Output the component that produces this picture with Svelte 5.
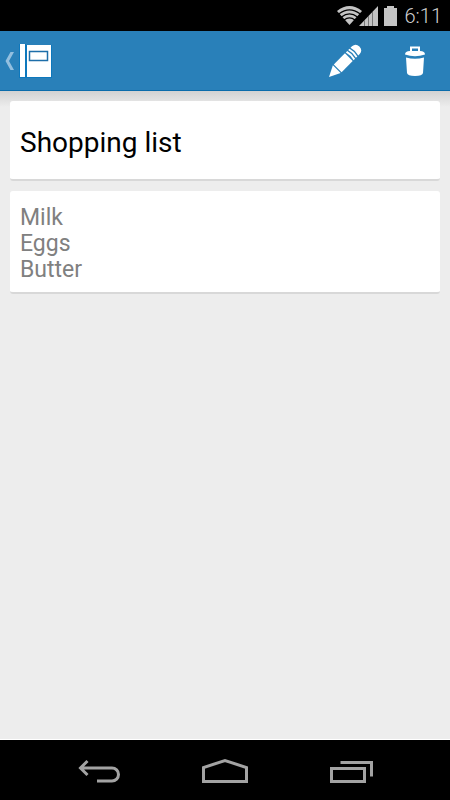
<script>
  let note = $state({
    title: "Shopping list",
    lines: ["Milk", "Eggs", "Butter"]
  });

  let time = $state("6:11");
</script>

<div class="screen">
  <div class="status-bar">
    <svg class="status-icons" width="61" height="20" viewBox="0 0 61 20" aria-hidden="true">
      <!-- wifi -->
      <path d="M0 5Q12.500 -5 25 5L12.500 19Z" fill="#c4c4c4" />
      <g fill="none" stroke="#000" stroke-width="1.300">
        <path d="M2 7.800Q12.500 -0.200 23 7.800" />
        <path d="M4.500 11Q12.500 4.800 20.500 11" />
        <path d="M7 14Q12.500 9.800 18 14" />
      </g>
      <!-- signal -->
      <path d="M22 20L41 0V20Z" fill="#c4c4c4" />
      <path d="M27.500 14V20M31.500 10V20M35.500 6V20" stroke="#777" stroke-width="1" />
      <!-- battery -->
      <path d="M47 2H50V0H57V2H60V20H47Z" fill="#c4c4c4" />
    </svg>
    <span class="clock">{time}</span>
  </div>

  <header class="action-bar">
    <button class="up" aria-label="Back to notes">
      <svg width="52" height="36" viewBox="0 0 52 36">
        <path d="M10.500 9H14L9 18L14 27H10.500L5.500 18Z" fill="#93bfdf" />
        <path d="M19 1H26V2H52V35H19Z" fill="#0d78bd" />
        <rect x="20" y="1" width="5" height="33" fill="#fff" />
        <rect x="27" y="2" width="24" height="32" fill="#fff" />
        <rect x="29.500" y="8.500" width="18" height="9" fill="#fff" stroke="#1d6ea9" stroke-width="1.500" />
      </svg>
    </button>
    <div class="actions">
      <button class="action" aria-label="Edit">
        <svg width="34" height="34" viewBox="0 0 34 34">
          <g transform="translate(1 33) rotate(-45)">
            <path d="M0 0L11 -5.500V5.500Z" fill="#fff" />
            <path d="M12.300 -5.500H28V5.500H12.300Z" fill="#fff" />
            <path d="M29.300 -5.500H31.300Q33 0 31.300 5.500H29.300Q31 0 29.300 -5.500ZM32.600 -5.500H34.600Q36.300 0 34.600 5.500H32.600Q34.300 0 32.600 -5.500ZM35.900 -5.500H38Q43 -5 43 0T38 5.500H35.900Q37.600 0 35.900 -5.500Z" fill="#fff" />
          </g>
        </svg>
      </button>
      <button class="action" aria-label="Delete">
        <svg width="22" height="30" viewBox="0 0 22 30">
          <path d="M7 5.500V1.500H15V5.500" fill="none" stroke="#fff" stroke-width="2" />
          <path d="M1 8.500Q1 5 6 5H16Q21 5 21 8.500Q11 12 1 8.500Z" fill="#fff" />
          <path d="M2 11.500Q11 14 20 11.500L19 27Q18.500 30 11 30T3 27Z" fill="#fff" />
        </svg>
      </button>
    </div>
  </header>

  <main>
    <h1 class="card title">{note.title}</h1>
    <div class="card body">
      {#each note.lines as line}
        <p>{line}</p>
      {/each}
    </div>
  </main>

  <nav class="nav-bar">
    <button aria-label="Back">
      <svg width="48" height="28" viewBox="0 0 48 28">
        <path d="M5 12H37A6.500 6.500 0 0 1 37 25H22M12.500 5L5.500 12L12.500 19" />
      </svg>
    </button>
    <button aria-label="Home">
      <svg width="48" height="28" viewBox="0 0 48 28">
        <path d="M2.500 25.500V11.500L24 4.500L45.500 11.500V25.500Z" />
      </svg>
    </button>
    <button aria-label="Recent apps">
      <svg width="48" height="28" viewBox="0 0 48 28">
        <path d="M4.500 12.500H37.500V25.500H4.500ZM13.500 6.500H44.500V20.500" />
      </svg>
    </button>
  </nav>
</div>

<style>
  :global(body) {
    margin: 0;
    background: #ededed;
  }

  .screen {
    display: flex;
    flex-direction: column;
    min-height: 100vh;
    font-family: Roboto, "Liberation Sans", sans-serif;
  }

  button {
    display: flex;
    align-items: center;
    border: 0;
    padding: 0;
    background: transparent;
    cursor: pointer;
  }

  svg {
    display: block;
  }

  .status-bar {
    display: flex;
    align-items: center;
    justify-content: flex-end;
    gap: 7px;
    height: 31px;
    padding-right: 8px;
    background: #000;
  }

  .clock {
    padding-top: 2px;
    font-size: 20px;
    font-weight: 300;
    line-height: 29px;
    color: #d0d0d0;
  }

  .action-bar {
    display: flex;
    justify-content: space-between;
    box-sizing: border-box;
    height: 60px;
    border-bottom: 1px solid #0b6cab;
    background: #2980b9;
  }

  .actions {
    display: flex;
  }

  .action {
    justify-content: center;
    width: 70px;
  }

  main {
    display: flex;
    flex: 1;
    flex-direction: column;
    gap: 10px;
    padding: 10px;
    border-bottom: 1px solid #fff;
    background: linear-gradient(#d2d2d2, #ededed 16px);
  }

  .card {
    margin: 0;
    border-bottom: 2px solid #d8d8d8;
    border-radius: 3px;
    background: #fff;
  }

  .title {
    padding: 25px 10px 19px;
    font-size: 28px;
    font-weight: 400;
    line-height: 34px;
    color: #000;
  }

  .body {
    padding: 14px 10px 9px;
  }

  .body p {
    margin: 0;
    font-size: 23px;
    line-height: 26px;
    color: #808080;
  }

  .nav-bar {
    display: flex;
    align-items: center;
    justify-content: center;
    gap: 24px;
    height: 60px;
    background: #000;
  }

  .nav-bar button {
    justify-content: center;
    width: 102px;
    height: 60px;
  }

  .nav-bar path {
    fill: none;
    stroke: #a3a3a3;
    stroke-width: 3;
  }
</style>
